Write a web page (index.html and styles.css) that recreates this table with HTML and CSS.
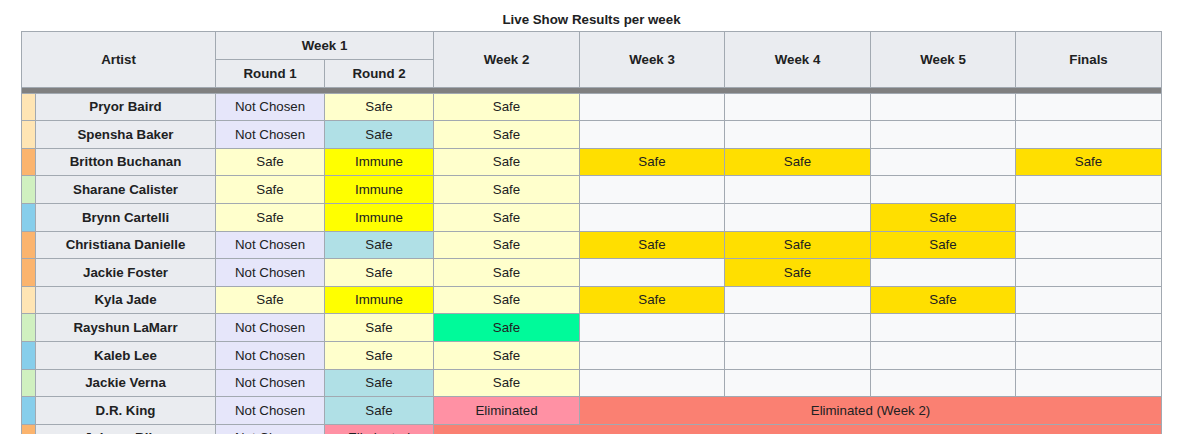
FILE: index.html
```html
<!DOCTYPE html>
<html>
<head>
<meta charset="utf-8">
<link rel="stylesheet" href="styles.css">
</head>
<body>
<table class="results">
<caption>Live Show Results per week</caption>
<colgroup>
<col class="c-strip"><col class="c-name"><col class="c-round"><col class="c-round"><col class="c-week2"><col class="c-week3"><col class="c-week4"><col class="c-week5"><col class="c-finals">
</colgroup>
<thead>
<tr><th colspan="2" rowspan="2">Artist</th><th colspan="2">Week 1</th><th rowspan="2">Week 2</th><th rowspan="2">Week 3</th><th rowspan="2">Week 4</th><th rowspan="2">Week 5</th><th rowspan="2">Finals</th></tr>
<tr><th>Round 1</th><th>Round 2</th></tr>
<tr class="sep"><td colspan="9"></td></tr>
</thead>
<tbody>
<tr><td class="team-peach"></td><th>Pryor Baird</th><td class="nc">Not Chosen</td><td class="safe">Safe</td><td class="safe">Safe</td><td></td><td></td><td></td><td></td></tr>
<tr><td class="team-peach"></td><th>Spensha Baker</th><td class="nc">Not Chosen</td><td class="saved">Safe</td><td class="safe">Safe</td><td></td><td></td><td></td><td></td></tr>
<tr><td class="team-orange"></td><th>Britton Buchanan</th><td class="safe">Safe</td><td class="immune">Immune</td><td class="safe">Safe</td><td class="gold">Safe</td><td class="gold">Safe</td><td></td><td class="gold">Safe</td></tr>
<tr><td class="team-green"></td><th>Sharane Calister</th><td class="safe">Safe</td><td class="immune">Immune</td><td class="safe">Safe</td><td></td><td></td><td></td><td></td></tr>
<tr><td class="team-blue"></td><th>Brynn Cartelli</th><td class="safe">Safe</td><td class="immune">Immune</td><td class="safe">Safe</td><td></td><td></td><td class="gold">Safe</td><td></td></tr>
<tr><td class="team-orange"></td><th>Christiana Danielle</th><td class="nc">Not Chosen</td><td class="saved">Safe</td><td class="safe">Safe</td><td class="gold">Safe</td><td class="gold">Safe</td><td class="gold">Safe</td><td></td></tr>
<tr><td class="team-orange"></td><th>Jackie Foster</th><td class="nc">Not Chosen</td><td class="safe">Safe</td><td class="safe">Safe</td><td></td><td class="gold">Safe</td><td></td><td></td></tr>
<tr><td class="team-peach"></td><th>Kyla Jade</th><td class="safe">Safe</td><td class="immune">Immune</td><td class="safe">Safe</td><td class="gold">Safe</td><td></td><td class="gold">Safe</td><td></td></tr>
<tr><td class="team-green"></td><th>Rayshun LaMarr</th><td class="nc">Not Chosen</td><td class="safe">Safe</td><td class="spring">Safe</td><td></td><td></td><td></td><td></td></tr>
<tr><td class="team-blue"></td><th>Kaleb Lee</th><td class="nc">Not Chosen</td><td class="safe">Safe</td><td class="safe">Safe</td><td></td><td></td><td></td><td></td></tr>
<tr><td class="team-green"></td><th>Jackie Verna</th><td class="nc">Not Chosen</td><td class="saved">Safe</td><td class="safe">Safe</td><td></td><td></td><td></td><td></td></tr>
<tr><td class="team-blue"></td><th>D.R. King</th><td class="nc">Not Chosen</td><td class="saved">Safe</td><td class="elim">Eliminated</td><td class="out" colspan="4">Eliminated (Week 2)</td></tr>
<tr><td class="team-orange"></td><th>Johnny Bliss</th><td class="nc">Not Chosen</td><td class="elim">Eliminated</td><td class="out" colspan="5" rowspan="2">Eliminated (Week 1)</td></tr>
<tr><td class="team-green"></td><th>Dylan Hartigan</th><td class="nc">Not Chosen</td><td class="elim">Eliminated</td></tr>
</tbody>
</table>
</body>
</html>
```
FILE: styles.css
```css
html, body {
  margin: 0;
  padding: 0;
  background: #ffffff;
}
body {
  padding: 9px 0 0 21px;
  font-family: "Liberation Sans", Arial, sans-serif;
  font-size: 13.3px;
  line-height: 21.3px;
  color: #202122;
}
.results {
  border-collapse: collapse;
  table-layout: fixed;
  width: 1141px;
  background: #f8f9fa;
  border: 1px solid #a2a9b1;
  color: #202122;
}
.results caption {
  font-weight: bold;
  text-align: center;
  padding-bottom: 1px;
}
.c-strip { width: 14px; }
.c-name { width: 180px; }
.c-round { width: 109px; }
.c-week2 { width: 146px; }
.c-week3 { width: 145px; }
.c-week4 { width: 146px; }
.c-week5 { width: 145px; }
.c-finals { width: 146px; }
.results th,
.results td {
  border: 1px solid #a2a9b1;
  padding: 2.66px 5.3px;
  text-align: center;
  height: 21.3px;
  white-space: nowrap;
  overflow: hidden;
}
.results th {
  background: #eaecf0;
  font-weight: bold;
}
.results tr.sep td {
  background: #808080;
  height: 5px;
  padding: 0;
  line-height: 0;
  font-size: 0;
}
.results td.team-peach { background: #ffe5b4; padding: 0; }
.results td.team-orange { background: #fbb46e; padding: 0; }
.results td.team-green { background: #d0f0c0; padding: 0; }
.results td.team-blue { background: #87ceeb; padding: 0; }
.nc { background: #e6e6fa; }
.safe { background: #ffffcc; }
.saved { background: #b0e0e6; }
.immune { background: #ffff00; }
.gold { background: #ffdf00; }
.spring { background: #00fa9a; }
.elim { background: #ff91a4; }
.out { background: #fa8072; }
```
